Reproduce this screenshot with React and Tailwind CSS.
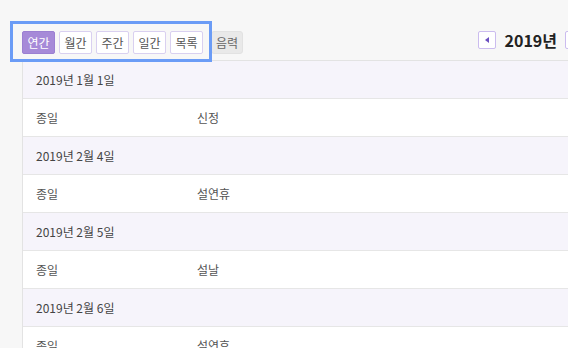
import React from "react";

const font = { fontFamily: '"Noto Sans CJK KR", "Noto Sans", sans-serif' };

const rows = [
  { date: "2019년 1월 1일", title: "신정" },
  { date: "2019년 2월 4일", title: "설연휴" },
  { date: "2019년 2월 5일", title: "설날" },
  { date: "2019년 2월 6일", title: "설연휴" },
];

export default function App() {
  const views = ["연간", "월간", "주간", "일간", "목록"];
  return (
    <div
      className="relative w-[568px] h-[348px] overflow-hidden bg-[#f7f7f7] text-[#555]"
      style={font}
    >
      {/* toolbar */}
      <div className="flex items-end h-[60px] pl-[22px] pb-[6px]">
        <div className="flex gap-[4px]">
          {views.map((v, i) => (
            <button
              key={v}
              className={
                i === 0
                  ? "w-[33px] h-[23px] rounded-[2px] border border-[#9b80d2] bg-[#a68ad8] text-white text-[12px] leading-none"
                  : "w-[33px] h-[23px] rounded-[2px] border border-[#d9d0f0] bg-white text-[#555] text-[12px] leading-none"
              }
            >
              {v}
            </button>
          ))}
        </div>
        <button className="ml-[8px] w-[32px] h-[23px] rounded-[3px] border border-[#e2e2e2] bg-[#e9e9e9] text-[#666] text-[12px] leading-none">
          음력
        </button>
        <div className="ml-auto mr-[-15px] mb-[5px] flex items-center">
          <button className="w-[18px] h-[18px] rounded-[2px] border border-[#cbbcef] bg-white flex items-center justify-center">
            <span className="block w-0 h-0 border-y-[3px] border-y-transparent border-r-[4px] border-r-[#6b4fc0]" />
          </button>
          <span className="ml-[9px] text-[16px] font-bold text-[#222] leading-none">2019년</span>
          <button className="ml-[8px] w-[18px] h-[18px] rounded-[2px] border border-[#cbbcef] bg-white shrink-0" />
        </div>
      </div>

      {/* list */}
      <div className="ml-[22px] border-l border-t border-[#e3e3e3]">
        {rows.map((r) => (
          <React.Fragment key={r.date}>
            <div className="h-[38px] flex items-center pl-[13px] bg-[#f6f4fb] border-b border-[#e6e6e6] text-[12px] text-[#444]">
              {r.date}
            </div>
            <div className="h-[38px] flex items-center pl-[13px] bg-white border-b border-[#e6e6e6] text-[12px] text-[#555]">
              <span className="w-[161px]">종일</span>
              <span>{r.title}</span>
            </div>
          </React.Fragment>
        ))}
      </div>

      {/* highlight overlay */}
      <div className="absolute left-[10px] top-[21px] w-[202px] h-[41px] border-[3px] border-[#6b9cf6] pointer-events-none" />
    </div>
  );
}
